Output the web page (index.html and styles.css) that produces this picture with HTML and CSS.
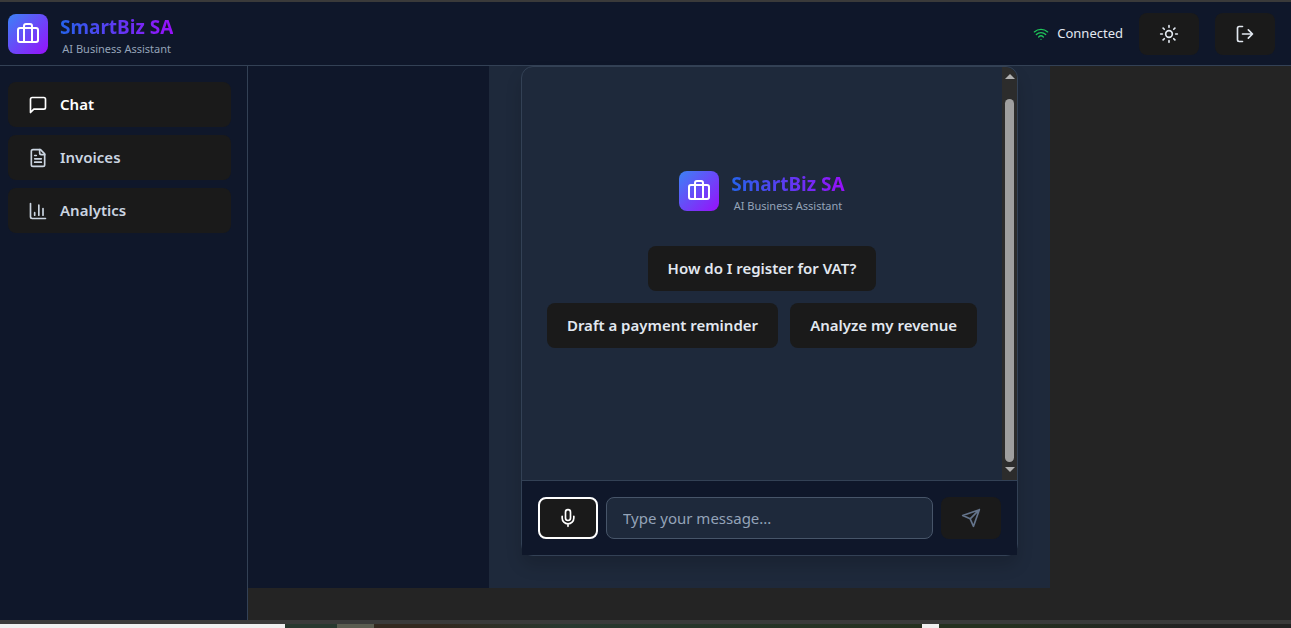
FILE: index.html
```html
<!DOCTYPE html>
<html lang="en">
<head>
  <meta charset="UTF-8" />
  <meta name="viewport" content="width=device-width, initial-scale=1.0" />
  <title>SmartBiz SA</title>
  <link rel="stylesheet" href="styles.css">
</head>
<body>

  <!-- Shared icon shapes -->
  <svg class="sprite" aria-hidden="true">
    <symbol id="icon-briefcase" viewBox="0 0 24 24">
      <path d="M16 20V4a2 2 0 0 0-2-2h-4a2 2 0 0 0-2 2v16" />
      <rect width="20" height="14" x="2" y="6" rx="2" />
    </symbol>
    <symbol id="icon-wifi" viewBox="0 0 24 24">
      <path d="M12 20h.01M2 8.82a15 15 0 0 1 20 0M5 12.86a10 10 0 0 1 14 0M8.5 16.43a5 5 0 0 1 7 0" />
    </symbol>
    <symbol id="icon-sun" viewBox="0 0 24 24">
      <circle cx="12" cy="12" r="4" />
      <path d="M12 2v2M12 20v2M4.93 4.93l1.41 1.41M17.66 17.66l1.41 1.41M2 12h2M20 12h2M6.34 17.66l-1.41 1.41M19.07 4.93l-1.41 1.41" />
    </symbol>
    <symbol id="icon-logout" viewBox="0 0 24 24">
      <path d="M9 21H5a2 2 0 0 1-2-2V5a2 2 0 0 1 2-2h4M16 17l5-5-5-5M21 12H9" />
    </symbol>
    <symbol id="icon-chat" viewBox="0 0 24 24">
      <path d="M21 15a2 2 0 0 1-2 2H7l-4 4V5a2 2 0 0 1 2-2h14a2 2 0 0 1 2 2z" />
    </symbol>
    <symbol id="icon-invoice" viewBox="0 0 24 24">
      <path d="M15 2H6a2 2 0 0 0-2 2v16a2 2 0 0 0 2 2h12a2 2 0 0 0 2-2V7z" />
      <path d="M14 2v4a2 2 0 0 0 2 2h4M10 9H8M16 13H8M16 17H8" />
    </symbol>
    <symbol id="icon-chart" viewBox="0 0 24 24">
      <path d="M3 3v16a2 2 0 0 0 2 2h16M18 17V9M13 17V5M8 17v-3" />
    </symbol>
    <symbol id="icon-mic" viewBox="0 0 24 24">
      <path d="M12 2a3 3 0 0 0-3 3v7a3 3 0 0 0 6 0V5a3 3 0 0 0-3-3Z" />
      <path d="M19 10v2a7 7 0 0 1-14 0v-2M12 19v3" />
    </symbol>
    <symbol id="icon-send" viewBox="0 0 24 24">
      <path d="M22 2 11 13M22 2l-7 20-4-9-9-4Z" />
    </symbol>
  </svg>

  <header class="topbar">
    <div class="brand">
      <span class="brand-mark"><svg class="icon icon-lg"><use href="#icon-briefcase" /></svg></span>
      <div class="brand-text">
        <h1 class="brand-name">SmartBiz SA</h1>
        <p class="brand-tag">AI Business Assistant</p>
      </div>
    </div>
    <div class="topbar-actions">
      <div class="status">
        <svg class="icon icon-sm"><use href="#icon-wifi" /></svg>
        <span>Connected</span>
      </div>
      <button type="button" class="btn" aria-label="Toggle theme"><svg class="icon"><use href="#icon-sun" /></svg></button>
      <button type="button" class="btn" aria-label="Log out"><svg class="icon"><use href="#icon-logout" /></svg></button>
    </div>
  </header>

  <div class="layout">
    <nav class="sidebar">
      <button type="button" class="btn nav-item active"><svg class="icon"><use href="#icon-chat" /></svg>Chat</button>
      <button type="button" class="btn nav-item"><svg class="icon"><use href="#icon-invoice" /></svg>Invoices</button>
      <button type="button" class="btn nav-item"><svg class="icon"><use href="#icon-chart" /></svg>Analytics</button>
    </nav>

    <main class="workspace">
      <div class="gutter"></div>
      <section class="panel">
        <div class="chat-card">
          <div class="messages">
            <div class="welcome">
              <div class="brand">
                <span class="brand-mark"><svg class="icon icon-lg"><use href="#icon-briefcase" /></svg></span>
                <div class="brand-text">
                  <h2 class="brand-name">SmartBiz SA</h2>
                  <p class="brand-tag">AI Business Assistant</p>
                </div>
              </div>
              <div class="suggestions">
                <button type="button" class="btn">How do I register for VAT?</button>
                <button type="button" class="btn">Draft a payment reminder</button>
                <button type="button" class="btn">Analyze my revenue</button>
              </div>
            </div>
            <div class="scrollbar" aria-hidden="true">
              <span class="arrow arrow-up"></span>
              <span class="thumb"></span>
              <span class="arrow arrow-down"></span>
            </div>
          </div>
          <form class="composer">
            <button type="button" class="btn mic" aria-label="Record voice"><svg class="icon"><use href="#icon-mic" /></svg></button>
            <input type="text" class="message-input" placeholder="Type your message..." aria-label="Message">
            <button type="submit" class="btn" aria-label="Send" disabled><svg class="icon"><use href="#icon-send" /></svg></button>
          </form>
        </div>
      </section>
    </main>
  </div>

  <footer class="desktop-strip"></footer>

</body>
</html>
```

FILE: styles.css
```css
* {
  box-sizing: border-box;
}
body {
  margin: 0;
  min-height: 100vh;
  display: flex;
  flex-direction: column;
  border-top: 2px solid #3a3a3a;
  background: #242424;
  color: #e2e8f0;
  font-family: "Segoe UI", "Noto Sans", "Open Sans", sans-serif;
  font-size: 15px;
  line-height: 23px;
}
h1, h2, p {
  margin: 0;
}
.sprite {
  display: none;
}
.icon {
  width: 20px;
  height: 20px;
  flex: none;
  fill: none;
  stroke: currentColor;
  stroke-width: 2;
  stroke-linecap: round;
  stroke-linejoin: round;
}
.icon-sm {
  width: 16px;
  height: 16px;
}
.icon-lg {
  width: 24px;
  height: 24px;
}

/* Buttons */
.btn {
  display: flex;
  align-items: center;
  justify-content: center;
  padding: 10px 19px;
  border: 1px solid transparent;
  border-radius: 8px;
  background: #1a1a1a;
  color: #e2e8f0;
  font: inherit;
  font-weight: 600;
  cursor: pointer;
}
.btn:disabled {
  color: #64748b;
  cursor: default;
}

/* Header */
.topbar {
  display: flex;
  align-items: center;
  justify-content: space-between;
  height: 64px;
  padding: 0 16px 0 8px;
  background: #0f172a;
  border-bottom: 1px solid #334155;
}
.brand {
  display: flex;
  align-items: center;
  gap: 12px;
}
.brand-mark {
  display: flex;
  align-items: center;
  justify-content: center;
  width: 40px;
  height: 40px;
  border-radius: 8px;
  background: linear-gradient(135deg, #3b82f6, #9810fa);
  color: #fff;
}
.brand-text {
  padding-top: 2px;
  text-align: center;
}
.brand-name {
  background: linear-gradient(90deg, #2563eb, #9810fa);
  background-clip: text;
  -webkit-background-clip: text;
  color: transparent;
  font-size: 19px;
  font-weight: 700;
  line-height: 28px;
}
.brand-tag {
  color: #94a3b8;
  font-size: 11px;
  line-height: 16px;
}
.topbar-actions {
  display: flex;
  align-items: center;
  gap: 16px;
}
.status {
  display: flex;
  align-items: center;
  gap: 8px;
  font-size: 13px;
}
.status .icon {
  color: #1fc45a;
}

/* Sidebar */
.layout {
  flex: 1;
  display: flex;
}
.sidebar {
  flex: none;
  display: flex;
  flex-direction: column;
  gap: 8px;
  width: 248px;
  padding: 16px 16px 16px 8px;
  background: #0f172a;
  border-right: 1px solid #334155;
}
.nav-item {
  justify-content: flex-start;
  gap: 12px;
  color: #cbd5e1;
}
.nav-item.active {
  color: #fff;
}

/* Chat */
.workspace {
  flex: 1;
  display: grid;
  grid-template-columns: 1fr minmax(0, 561px) 1fr;
  margin-bottom: 32px;
}
.gutter {
  background: #0f172a;
}
.panel {
  display: flex;
  padding: 0 32px 32px;
  background: #1e293b;
}
.chat-card {
  flex: 1;
  display: flex;
  flex-direction: column;
  border: 1px solid #334155;
  border-radius: 12px;
  box-shadow: 0 10px 16px rgba(0, 0, 0, 0.15);
}
.messages {
  flex: 1;
  display: flex;
}
.welcome {
  flex: 1;
  display: flex;
  flex-direction: column;
  align-items: center;
  justify-content: center;
  gap: 32px;
  padding: 16px 16px 48px;
}
.suggestions {
  display: flex;
  flex-wrap: wrap;
  justify-content: center;
  gap: 12px;
  max-width: 448px;
}
.scrollbar {
  display: flex;
  flex-direction: column;
  align-items: center;
  gap: 5px;
  width: 15px;
  padding: 7px 0 8px;
  border-top-right-radius: 12px;
  background: #2c2c2c;
}
.thumb {
  flex: 1;
  width: 9px;
  margin-top: 15px;
  border-radius: 5px;
  background: #9f9f9f;
}
.arrow {
  border: 5px solid transparent;
}
.arrow-up {
  border-top: 0;
  border-bottom-color: #b0b0b0;
}
.arrow-down {
  border-bottom: 0;
  border-top-color: #b0b0b0;
}
.composer {
  display: flex;
  gap: 8px;
  padding: 16px;
  background: #0f172a;
  border-top: 1px solid #334155;
}
.composer .btn,
.message-input {
  height: 42px;
}
.composer .mic {
  padding: 0 18px;
  border: 2px solid #fff;
  color: #fff;
}
.message-input {
  flex: 1;
  min-width: 0;
  padding: 8px 16px;
  border: 1px solid #475569;
  border-radius: 8px;
  background: #1e293b;
  color: #e2e8f0;
  font: inherit;
}
.message-input::placeholder {
  color: #94a3b8;
}

/* Window edge and the slice of desktop below it */
.desktop-strip {
  height: 8px;
  border-top: 4px solid #3a3a3a;
  background: linear-gradient(90deg,
    #f0f0f0 0 22.1%,
    #28382f 22.1% 26.1%,
    #5a5c50 26.1% 29%,
    #33291f 29% 34%,
    #28382f 44%,
    #25301f 71.4%,
    #f0f0f0 71.4% 72.7%,
    #25301f 72.7% 78%,
    #222 92%);
}
```
